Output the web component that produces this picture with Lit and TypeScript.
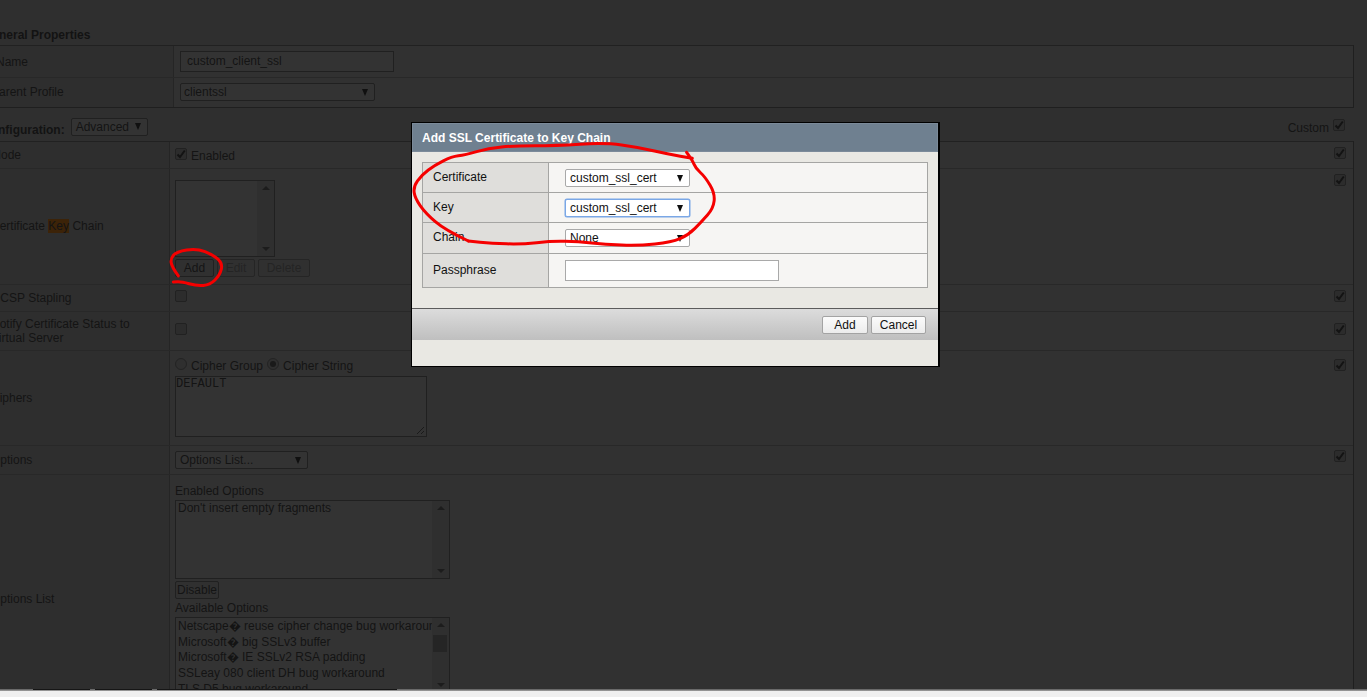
import { LitElement, html, css, svg } from "lit";
import { customElement } from "lit/decorators.js";

type Pt = [number, number];

function smooth(pts: Pt[]): string {
  let d = `M${pts[0][0]} ${pts[0][1]}`;
  for (let i = 1; i < pts.length - 1; i++) {
    const mx = (pts[i][0] + pts[i + 1][0]) / 2;
    const my = (pts[i][1] + pts[i + 1][1]) / 2;
    d += ` Q${pts[i][0]} ${pts[i][1]} ${mx} ${my}`;
  }
  const last = pts[pts.length - 1];
  return d + ` L${last[0]} ${last[1]}`;
}

const bigLoop: Pt[] = [
  [190, 378], [120, 345], [62, 295], [30, 250], [25, 215], [50, 180], [90, 150], [140, 125], [180, 120],
  [250, 100], [330, 92], [450, 92], [600, 83], [700, 97], [790, 117], [862, 130],
];
const bigLoop2: Pt[] = [
  [845, 112], [862, 135], [872, 160], [900, 185], [930, 235], [925, 280], [890, 320], [850, 360], [800, 382],
  [700, 392], [600, 388], [520, 380], [440, 378], [350, 388], [260, 385], [190, 378],
];
const smallLoop: Pt[] = [
  [535, 828], [515, 800], [512, 775], [530, 755], [590, 745], [640, 765], [668, 790], [660, 825], [630, 855],
  [590, 858], [545, 845], [520, 846],
];

@customElement("app-root")
export class AppRoot extends LitElement {
  static styles = css`
    :host {
      display: block;
      width: 1367px;
      height: 697px;
      overflow: hidden;
      font: 12px "Liberation Sans", Arial, sans-serif;
      color: #141414;
      background: #f0f0f0;
    }
    * { box-sizing: border-box; }
    .page { display: flex; flex-direction: column; height: 697px; }
    .stage {
      position: relative;
      height: 689px;
      flex: none;
      overflow: hidden;
      background: #2f2f2f;
      padding-top: 28px;
    }
    .strip { display: flex; height: 2px; flex: none; background: linear-gradient(#555, #a8a8a8); padding-left: 33px; gap: 5px; }
    .strip i { width: 57px; height: 1px; background: #161616; }
    .strip i:last-child { width: 240px; }
    .bar { flex: 1; background: #f0f0f0; }

    .heading { font-weight: bold; margin-left: -17px; line-height: 14px; height: 17px; color: #131313; }
    .table { width: 1354px; border-top: 1px solid #212121; border-right: 1px solid #1f1f1f; }
    .row {
      display: grid;
      border-bottom: 1px solid #282828;
      background: #313131;
    }
    .general .row { grid-template-columns: 174px 1fr; }
    .general .value { padding: 0 6px; }
    .general { border-bottom: 1px solid #1f1f1f; }
    .general .row:last-child { border-bottom: 0; }
    .config .row { grid-template-columns: 170px 1fr 31px; }
    .label {
      background: #2e2e2e;
      border-right: 1px solid #252525;
      display: flex;
      align-items: center;
      line-height: 14px;
      min-width: 0;
      overflow: hidden;
    }
    .label > span { margin-left: -9px; white-space: nowrap; }
    .label > .name { margin-left: -4px; }
    .label > .cert-label { margin-top: -2px; }
    .parent-label { padding-bottom: 2px; }
    .mark { background: #3c2308; padding: 0; display: inline-block; line-height: 14px; }
    .value { padding: 0 5px; display: flex; flex-direction: column; align-items: flex-start; min-width: 0; }
    .chk-cell { display: flex; justify-content: flex-start; padding: 5px 0 0 12px; }
    .chk-notify { padding-top: 11px; }
    .chk-ciphers { padding-top: 8px; }
    .chk-options { padding-top: 4px; }

    .h32 { height: 32px; }
    .h30 { height: 29px; }
    .input {
      width: 214px; height: 21px; margin-top: 5px;
      border: 1px solid #202020; background: #333; padding: 0 6px; line-height: 19px;
    }
    .select {
      display: flex; align-items: center; justify-content: space-between;
      height: 18px; border: 1px solid #202020; border-radius: 2px; background: #333;
      padding: 0 6px 0 4px;
    }
    .tri { width: 0; height: 0; border-left: 3.5px solid transparent; border-right: 3.5px solid transparent; border-top: 7px solid #101010; flex: none; }
    .parent { width: 195px; margin-top: 5px; padding-left: 3px; }

    .confbar { display: flex; align-items: center; height: 33px; padding-top: 6px; width: 1345px; }
    .confbar b { margin-left: -18px; margin-top: 5px; color: #131313; }
    .adv { width: 77px; margin-left: 6px; margin-top: -2px; }
    .custom { margin-left: auto; display: flex; align-items: center; gap: 4px; }
    .custom .check { margin-top: -5px; }

    .check {
      width: 12px; height: 12px; border: 1px solid #212121; border-radius: 2px; background: #2c2c2c;
      display: inline-flex; align-items: center; justify-content: center; flex: none;
    }
    .check svg { display: block; }
    .radio { width: 12px; height: 12px; border: 1px solid #232323; border-radius: 50%; background: #2f2f2f; display: inline-flex; align-items: center; justify-content: center; flex: none; }
    .radio i { width: 6px; height: 6px; border-radius: 50%; background: #1a1a1a; }
    .inline { display: flex; align-items: center; gap: 4px; margin-top: 2px; }
    .inline .check, .inline .radio, .lift { margin-top: -4px; }

    .mode { height: 27px; }
    .mode .value { justify-content: center; }
    .cert { height: 116px; }
    .cert .value { padding-top: 11px; }
    .listbox {
      border: 1px solid #202020; background: #333; display: flex; overflow: hidden;
    }
    .lb-body { flex: 1; min-width: 0; padding: 1px 2px 0; white-space: nowrap; overflow: hidden; line-height: 15.7px; }
    .lb-tight { padding-top: 1px; line-height: 13px; }
    .sb {
      width: 17px; flex: none; background: #2f2f2f; display: flex; flex-direction: column;
      align-items: center; justify-content: space-between; padding: 5px 0; position: relative;
    }
    .up { width: 0; height: 0; border-left: 4px solid transparent; border-right: 4px solid transparent; border-bottom: 4px solid #1c1c1c; }
    .dn { width: 0; height: 0; border-left: 4px solid transparent; border-right: 4px solid transparent; border-top: 4px solid #1c1c1c; }
    .thumb { position: absolute; top: 17px; left: 1px; width: 14px; height: 17px; background: #252525; }
    .btns { display: flex; gap: 3px; margin-top: 2px; }
    .btn {
      height: 18px; border: 1px solid #202020; border-radius: 2px; background: #303030;
      display: flex; align-items: center; justify-content: center; line-height: 14px;
    }
    .off { color: #242424; border-color: #252525; }
    .w39 { width: 39px; }
    .w38 { width: 38px; }
    .w52 { width: 52px; }
    .w44 { width: 44px; margin-top: 2px; }

    .ocsp { height: 27px; }
    .ocsp .value { justify-content: center; }
    .notify { height: 39px; }
    .notify .value { justify-content: center; }
    .ciphers { height: 95px; }
    .ciphers .value { padding-top: 6px; }
    .textarea {
      width: 252px; height: 61px; margin-top: 3px; border: 1px solid #202020; background: #333;
      font: 12px/14px "Liberation Mono", monospace; padding: 0; position: relative;
    }
    .grip { position: absolute; right: 1px; bottom: 1px; }
    .options { height: 29px; }
    .options .value { justify-content: center; }
    .optsel { width: 133px; }
    .optlist { height: 248px; }
    .optlist .label { align-items: flex-start; padding-top: 117px; }
    .optlist .value { padding-top: 9px; }
    .cap { line-height: 14px; }
    .cap2 { margin-top: 2px; }
    .lb-cert { width: 100px; height: 77px; }
    .lb-enabled { width: 275px; height: 79px; margin-top: 2px; }
    .lb-avail { width: 275px; height: 76px; margin-top: 2px; }

    .dialog {
      position: absolute; left: 411px; top: 122px; width: 529px; height: 245px;
      background: #e9e8e3; border: 1px solid #000; border-right-width: 2px;
      color: #111; display: flex; flex-direction: column;
    }
    .d-head {
      height: 29px; background: #6f8090; color: #fff; font-weight: bold; padding: 7px 9px 0;
      line-height: 14px; flex: none; border: 1px solid #7b8a99;
    }
    .d-body { padding: 10px 10px 0; height: 156px; flex: none; }
    .d-table { border: 1px solid #a5a5a3; width: 506px; }
    .d-row { display: grid; grid-template-columns: 126px 1fr; height: 30px; border-bottom: 1px solid #a5a5a3; }
    .d-row:last-child { border-bottom: 0; height: 33px; }
    .d-row.third { height: 31px; }
    .d-label { background: #dfdedb; border-right: 1px solid #a5a5a3; padding: 7px 0 0 10px; line-height: 15px; }
    .d-label.pass { padding-top: 9px; }
    .d-val { background: #f6f5f3; padding: 6px 0 0 16px; }
    .d-sel {
      width: 125px; height: 18px; border: 1px solid #a9a9a9; border-radius: 2px; background: #fff;
      display: flex; align-items: center; justify-content: space-between; padding: 0 6px 0 4px; color: #111;
    }
    .d-sel.focus { border-color: #7aa7e6; box-shadow: 0 0 0 .5px #7aa7e6; }
    .d-text { width: 214px; height: 21px; border: 1px solid #a9a9a9; background: #fff; }
    .d-foot {
      height: 32px; flex: none; border-top: 1px solid #5c5c5c;
      background: linear-gradient(#dcdcdc, #bfbfbf);
      display: flex; justify-content: flex-end; align-items: flex-start; gap: 3px; padding: 7px 12px 0 0;
    }
    .d-btn {
      height: 18px; border: 1px solid #a3a3a3; border-radius: 2px; background: linear-gradient(#fbfbfb, #ececec);
      display: flex; align-items: center; justify-content: center; color: #111;
    }
    .d-add { width: 46px; }
    .d-cancel { width: 55px; }
    .scribble { position: absolute; inset: 0; width: 1367px; height: 689px; pointer-events: none; }
    .ink { fill: none; stroke: #f50000; stroke-width: 9; stroke-linecap: round; stroke-linejoin: round; }
  `;

  private check(on: boolean, cls = "") {
    return html`<span class="check ${cls}">${on
      ? svg`<svg width="10" height="10" viewBox="0 0 10 10"><path d="M1.5 5.5 L4 8 L8.8 1.5" fill="none" stroke="#131313" stroke-width="2"/></svg>`
      : ""}</span>`;
  }

  private rowCheck(cls = "") {
    return html`<div class="chk-cell ${cls}">${this.check(true)}</div>`;
  }

  render() {
    return html`
      <div class="page">
        <div class="stage">
          <div class="heading">General Properties</div>
          <div class="table general">
            <div class="row h32">
              <div class="label"><span class="name">Name</span></div>
              <div class="value"><div class="input">custom_client_ssl</div></div>
            </div>
            <div class="row h30">
              <div class="label parent-label"><span>Parent Profile</span></div>
              <div class="value"><div class="select parent">clientssl<i class="tri"></i></div></div>
            </div>
          </div>

          <div class="confbar">
            <b>Configuration:</b>
            <div class="select adv">Advanced<i class="tri"></i></div>
            <div class="custom">Custom ${this.check(true)}</div>
          </div>

          <div class="table config">
            <div class="row mode">
              <div class="label"><span>Mode</span></div>
              <div class="value"><div class="inline">${this.check(true)}Enabled</div></div>
              ${this.rowCheck()}
            </div>
            <div class="row cert">
              <div class="label"><span class="cert-label">Certificate <span class="mark">Key</span> Chain</span></div>
              <div class="value">
                <div class="listbox lb-cert">
                  <div class="lb-body"></div>
                  <div class="sb"><i class="up"></i><i class="dn"></i></div>
                </div>
                <div class="btns">
                  <div class="btn w39">Add</div>
                  <div class="btn off w38">Edit</div>
                  <div class="btn off w52">Delete</div>
                </div>
              </div>
              ${this.rowCheck()}
            </div>
            <div class="row ocsp">
              <div class="label"><span>OCSP Stapling</span></div>
              <div class="value">${this.check(false, "lift")}</div>
              ${this.rowCheck()}
            </div>
            <div class="row notify">
              <div class="label"><span>Notify Certificate Status to<br />Virtual Server</span></div>
              <div class="value">${this.check(false, "lift")}</div>
              ${this.rowCheck("chk-notify")}
            </div>
            <div class="row ciphers">
              <div class="label"><span>Ciphers</span></div>
              <div class="value">
                <div class="inline">
                  <span class="radio"></span>Cipher Group
                  <span class="radio"><i></i></span>Cipher String
                </div>
                <div class="textarea">DEFAULT
                  <svg class="grip" width="9" height="9" viewBox="0 0 9 9"><path d="M1 8 L8 1 M5 8 L8 5" stroke="#1a1a1a" fill="none"/></svg>
                </div>
              </div>
              ${this.rowCheck("chk-ciphers")}
            </div>
            <div class="row options">
              <div class="label"><span>Options</span></div>
              <div class="value"><div class="select optsel">Options List...<i class="tri"></i></div></div>
              ${this.rowCheck("chk-options")}
            </div>
            <div class="row optlist">
              <div class="label"><span>Options List</span></div>
              <div class="value">
                <div class="cap">Enabled Options</div>
                <div class="listbox lb-enabled">
                  <div class="lb-body lb-tight">Don't insert empty fragments</div>
                  <div class="sb"><i class="up"></i><i class="dn"></i></div>
                </div>
                <div class="btn w44">Disable</div>
                <div class="cap cap2">Available Options</div>
                <div class="listbox lb-avail">
                  <div class="lb-body">Netscape\uFFFD reuse cipher change bug workaround<br />Microsoft\uFFFD big SSLv3 buffer<br />Microsoft\uFFFD IE SSLv2 RSA padding<br />SSLeay 080 client DH bug workaround<br />TLS D5 bug workaround</div>
                  <div class="sb"><i class="up"></i><i class="thumb"></i><i class="dn"></i></div>
                </div>
              </div>
              <div></div>
            </div>
          </div>

          <div class="dialog">
            <div class="d-head">Add SSL Certificate to Key Chain</div>
            <div class="d-body">
              <div class="d-table">
                <div class="d-row">
                  <div class="d-label">Certificate</div>
                  <div class="d-val"><div class="d-sel">custom_ssl_cert<i class="tri"></i></div></div>
                </div>
                <div class="d-row">
                  <div class="d-label">Key</div>
                  <div class="d-val"><div class="d-sel focus">custom_ssl_cert<i class="tri"></i></div></div>
                </div>
                <div class="d-row third">
                  <div class="d-label">Chain</div>
                  <div class="d-val"><div class="d-sel">None<i class="tri"></i></div></div>
                </div>
                <div class="d-row">
                  <div class="d-label pass">Passphrase</div>
                  <div class="d-val"><div class="d-text"></div></div>
                </div>
              </div>
            </div>
            <div class="d-foot">
              <div class="d-btn d-add">Add</div>
              <div class="d-btn d-cancel">Cancel</div>
            </div>
          </div>

          <svg class="scribble" viewBox="0 0 1367 689">
            <g transform="translate(405 115) scale(.3333)" class="ink">
              <path d=${smooth(bigLoop)} />
              <path d=${smooth(bigLoop2)} />
            </g>
            <g transform="scale(.3333)" class="ink">
              <path d=${smooth(smallLoop)} />
            </g>
          </svg>
        </div>
        <div class="strip"><i></i><i></i><i></i></div>
        <div class="bar"></div>
      </div>
    `;
  }
}
